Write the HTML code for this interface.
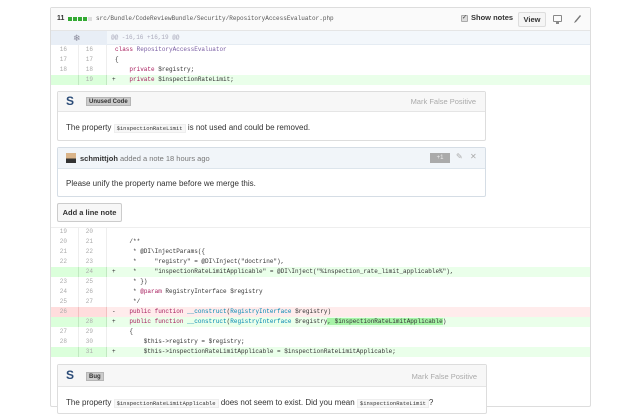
<!DOCTYPE html>
<html><head><meta charset="utf-8"><style>
*{margin:0;padding:0;box-sizing:border-box}
body{width:640px;height:400px;background:#fff;position:relative;overflow:hidden;font-family:"Liberation Sans",sans-serif;color:#333}
.a{position:absolute}
.mono{font-family:"Liberation Mono",monospace;font-size:6px}
.row{position:absolute;left:51px;width:539px;height:10px;line-height:10px;font-family:"Liberation Mono",monospace;font-size:6px;white-space:pre;color:#333}
.row .n1{position:absolute;left:0;width:28px;height:10px;text-align:right;padding-right:11px;color:#aaa;border-right:1px solid #eee}
.row .n2{position:absolute;left:28px;width:28px;height:10px;text-align:right;padding-right:13px;color:#aaa;border-right:1px solid #eee}
.row .s{position:absolute;left:61px}
.row .c{position:absolute;left:64px}
.add{background:#eaffea}.add .n1,.add .n2{background:#dbffdb;border-color:#c1e9c1}
.del{background:#ffecec}.del .n1,.del .n2{background:#ffdddd;border-color:#f1c0c0}
.k{color:#a71d5d}.t{color:#795da3}.b{color:#0086b3}
.box{position:absolute;border:1px solid #ddd;border-radius:2px;background:#fff}
.bh{position:absolute;left:0;right:0;top:0;background:#f7f7f7;border-bottom:1px solid #e5e5e5}
.lbl{position:absolute;background:#ccc;border:1px solid #b5b5b5;font-size:6px;font-weight:bold;padding:0 2px;height:9px;line-height:8px;color:#333}
.mfp{position:absolute;right:9px;font-size:7.5px;color:#aaa}
.logo{position:absolute;font-weight:bold;color:#2a4b77;font-size:12px;font-family:"Liberation Sans",sans-serif}
.code{background:#f7f7f7;border:1px solid #eee;font-family:"Liberation Mono",monospace;font-size:5.5px;padding:0 2px}
</style></head><body>
<div class="a" style="left:50px;top:7px;width:541px;height:400px;border:1px solid #ddd;border-radius:2px"></div>
<div class="a" style="left:51px;top:8px;width:539px;height:23px;background:#fafafa;border-bottom:1px solid #e5e5e5"></div>
<div class="a" style="left:57px;top:14px;font-size:7px;font-weight:bold;line-height:10px">11</div>
<div class="a" style="left:68px;top:17px;width:4px;height:4px;background:#3a3"></div>
<div class="a" style="left:73px;top:17px;width:4px;height:4px;background:#3a3"></div>
<div class="a" style="left:78px;top:17px;width:4px;height:4px;background:#3a3"></div>
<div class="a" style="left:83px;top:17px;width:4px;height:4px;background:#3a3"></div>
<div class="a" style="left:88px;top:17px;width:4px;height:4px;background:#ddd"></div>
<div class="a mono" style="left:96px;top:14px;line-height:10px;color:#555">src/Bundle/CodeReviewBundle/Security/RepositoryAccessEvaluator.php</div>
<div class="a" style="left:461px;top:15px;width:7px;height:7px;background:#ddd;border:1px solid #aaa;border-radius:1px;font-size:6px;line-height:5px;text-align:center;color:#333">✓</div>
<div class="a" style="left:471px;top:13px;font-size:7.5px;font-weight:bold;line-height:10px">Show notes</div>
<div class="a" style="left:518px;top:12px;width:28px;height:15px;background:#f5f5f5;border:1px solid #ddd;border-radius:2px;font-size:7.5px;font-weight:bold;text-align:center;line-height:13px">View</div>
<div class="a" style="left:553px;top:15px;width:9px;height:7px;border:1px solid #888;border-radius:1px"></div>
<div class="a" style="left:556px;top:22px;width:3px;height:2px;background:#888"></div>
<svg class="a" style="left:573px;top:13px" width="9" height="10"><path d="M2 8 L7 2 L8 3 L3 9 Z M2 8 L1 10 L3 9" fill="#777"/></svg>
<div class="a" style="left:51px;top:31px;width:539px;height:14px;background:#f3f7fb;border-bottom:1px solid #e5ecf3"></div>
<div class="a" style="left:51px;top:31px;width:56px;height:14px;background:#e8eef6"></div>
<div class="a" style="left:73px;top:32px;font-size:9px;color:#889;line-height:12px">❄</div>
<div class="a mono" style="left:111px;top:33px;line-height:10px;color:#aab">@@ -16,16 +16,19 @@</div>
<div class="row" style="top:45px"><span class="n1">16</span><span class="n2">16</span><span class="c"><span class="k">class</span> <span class="t">RepositoryAccessEvaluator</span></span></div>
<div class="row" style="top:55px"><span class="n1">17</span><span class="n2">17</span><span class="c">{</span></div>
<div class="row" style="top:65px"><span class="n1">18</span><span class="n2">18</span><span class="c">    <span class="k">private</span> $registry;</span></div>
<div class="row add" style="top:75px"><span class="n1"></span><span class="n2">19</span><span class="s">+</span><span class="c">    <span class="k">private</span> $inspectionRateLimit;</span></div>
<div class="a" style="left:51px;top:85px;width:539px;height:143px;background:#fff;border-bottom:1px solid #eee"></div>
<div class="box" style="left:57px;top:91px;width:429px;height:50px">
 <div class="bh" style="height:20px"></div>
 <div class="logo" style="left:8px;top:2px">S</div>
 <div class="lbl" style="left:28px;top:5px">Unused Code</div>
 <div class="mfp" style="top:5px">Mark False Positive</div>
 <div class="a" style="left:8px;top:31px;font-size:8px">The property <span class="code">$inspectionRateLimit</span> is not used and could be removed.</div>
</div>
<div class="box" style="left:57px;top:147px;width:429px;height:50px;border-color:#d5dde5">
 <div class="bh" style="height:21px;background:#f1f5f9;border-color:#dde5ec"></div>
 <div class="a" style="left:8px;top:5px;width:10px;height:10px;background:linear-gradient(#d9b48a 55%,#333 55%)"></div>
 <div class="a" style="left:22px;top:6px;font-size:7.5px;color:#777"><b style="color:#333">schmittjoh</b> added a note 18 hours ago</div>
 <div class="a" style="left:372px;top:5px;width:20px;height:10px;background:#aaa;color:#eee;font-size:6px;text-align:center;line-height:10px">+1</div>
 <div class="a" style="left:398px;top:4px;font-size:8px;color:#aaa">✎</div>
 <div class="a" style="left:412px;top:4px;font-size:8px;color:#aaa">✕</div>
 <div class="a" style="left:8px;top:31px;font-size:8px">Please unify the property name before we merge this.</div>
</div>
<div class="a" style="left:57px;top:203px;width:65px;height:19px;background:#f7f7f7;border:1px solid #ccc;border-radius:2px;font-size:7.5px;font-weight:bold;text-align:center;line-height:17px">Add a line note</div>
<div class="row" style="top:227px"><span class="n1">19</span><span class="n2">20</span></div>
<div class="row" style="top:237px"><span class="n1">20</span><span class="n2">21</span><span class="c">    /**</span></div>
<div class="row" style="top:247px"><span class="n1">21</span><span class="n2">22</span><span class="c">     * @DI\InjectParams({</span></div>
<div class="row" style="top:257px"><span class="n1">22</span><span class="n2">23</span><span class="c">     *     "registry" = @DI\Inject("doctrine"),</span></div>
<div class="row add" style="top:267px"><span class="n1"></span><span class="n2">24</span><span class="s">+</span><span class="c">     *     "inspectionRateLimitApplicable" = @DI\Inject("%inspection_rate_limit_applicable%"),</span></div>
<div class="row" style="top:277px"><span class="n1">23</span><span class="n2">25</span><span class="c">     * })</span></div>
<div class="row" style="top:287px"><span class="n1">24</span><span class="n2">26</span><span class="c">     * <span class="k">@param</span> RegistryInterface $registry</span></div>
<div class="row" style="top:297px"><span class="n1">25</span><span class="n2">27</span><span class="c">     */</span></div>
<div class="row del" style="top:307px"><span class="n1">26</span><span class="n2"></span><span class="s">-</span><span class="c">    <span class="k">public function</span> <span class="b">__construct</span>(<span class="b">RegistryInterface</span> $registry)</span></div>
<div class="row add" style="top:317px"><span class="n1"></span><span class="n2">28</span><span class="s">+</span><span class="c">    <span class="k">public function</span> <span class="b">__construct</span>(<span class="b">RegistryInterface</span> $registry<span style="background:#a6f3a6">, $inspectionRateLimitApplicable</span>)</span></div>
<div class="row" style="top:327px"><span class="n1">27</span><span class="n2">29</span><span class="c">    {</span></div>
<div class="row" style="top:337px"><span class="n1">28</span><span class="n2">30</span><span class="c">        $this-&gt;registry = $registry;</span></div>
<div class="row add" style="top:347px"><span class="n1"></span><span class="n2">31</span><span class="s">+</span><span class="c">        $this-&gt;inspectionRateLimitApplicable = $inspectionRateLimitApplicable;</span></div>
<div class="box" style="left:57px;top:364px;width:430px;height:50px">
 <div class="bh" style="height:22px"></div>
 <div class="logo" style="left:8px;top:3px">S</div>
 <div class="lbl" style="left:28px;top:7px">Bug</div>
 <div class="mfp" style="top:7px">Mark False Positive</div>
 <div class="a" style="left:8px;top:33px;font-size:8px;white-space:nowrap">The property <span class="code">$inspectionRateLimitApplicable</span> does not seem to exist. Did you mean <span class="code">$inspectionRateLimit</span>?</div>
</div>
</body></html>
